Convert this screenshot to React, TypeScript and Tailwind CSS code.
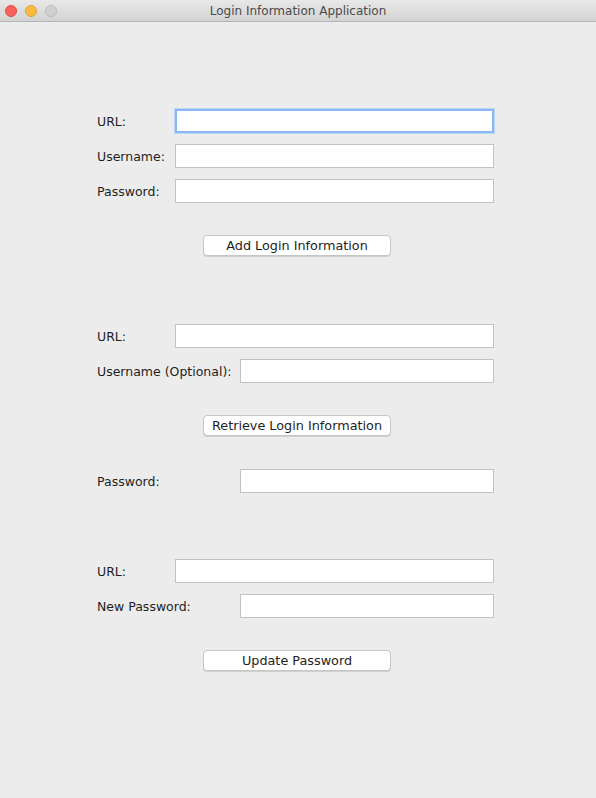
import React from "react";

const font = { fontFamily: '"DejaVu Sans", "Liberation Sans", sans-serif' };

function Field({ label, labelW, focused }: { label: string; labelW: string; focused?: boolean }) {
  return (
    <div className="flex items-center h-6">
      <span className={`${labelW} shrink-0 pt-[2px] text-[12.5px] text-[#1e1e1e]`}>{label}</span>
      <div
        className={`flex-1 h-6 bg-white ${
          focused
            ? "border-2 border-[#8ab8f5] shadow-[0_0_0_1px_#bcd6fa]"
            : "border border-[#c2c2c2]"
        }`}
      />
    </div>
  );
}

function Btn({ text }: { text: string }) {
  return (
    <div className="flex pl-[106px]">
      <button className="w-[188px] h-[21px] pt-[2px] bg-white border border-[#c6c6c6] rounded-[4px] shadow-[0_1px_0_#d0d0d0] text-[12.8px] text-[#1e1e1e] leading-none">
        {text}
      </button>
    </div>
  );
}

export default function App() {
  return (
    <div className="w-[596px] h-[798px] bg-[#ececec] flex flex-col" style={font}>
      {/* Title bar */}
      <div className="h-[22px] shrink-0 flex items-center px-[5px] bg-gradient-to-b from-[#e8e8e8] to-[#d3d3d3] border-b border-[#b5b5b5] relative">
        <div className="flex gap-[8px]">
          <span className="w-3 h-3 rounded-full bg-[#fc605c] border border-[#de4a45]" />
          <span className="w-3 h-3 rounded-full bg-[#fdbc40] border border-[#dea235]" />
          <span className="w-3 h-3 rounded-full bg-[#d0d0d0] border border-[#bcbcbc]" />
        </div>
        <div className="absolute inset-0 flex items-center justify-center text-[12px] text-[#4a4a4a]">
          Login Information Application
        </div>
      </div>

      <div className="flex flex-col pl-[97px] pr-[102px]">
        {/* Add section */}
        <div className="flex flex-col gap-[11px] mt-[87px]">
          <Field label="URL:" labelW="w-[78px]" focused />
          <Field label="Username:" labelW="w-[78px]" />
          <Field label="Password:" labelW="w-[78px]" />
        </div>
        <div className="mt-[32px]">
          <Btn text="Add Login Information" />
        </div>

        {/* Retrieve section */}
        <div className="flex flex-col gap-[11px] mt-[68px]">
          <Field label="URL:" labelW="w-[78px]" />
          <Field label="Username (Optional):" labelW="w-[143px]" />
        </div>
        <div className="mt-[32px]">
          <Btn text="Retrieve Login Information" />
        </div>
        <div className="mt-[33px]">
          <Field label="Password:" labelW="w-[143px]" />
        </div>

        {/* Update section */}
        <div className="flex flex-col gap-[11px] mt-[66px]">
          <Field label="URL:" labelW="w-[78px]" />
          <Field label="New Password:" labelW="w-[143px]" />
        </div>
        <div className="mt-[32px]">
          <Btn text="Update Password" />
        </div>
      </div>
    </div>
  );
}
